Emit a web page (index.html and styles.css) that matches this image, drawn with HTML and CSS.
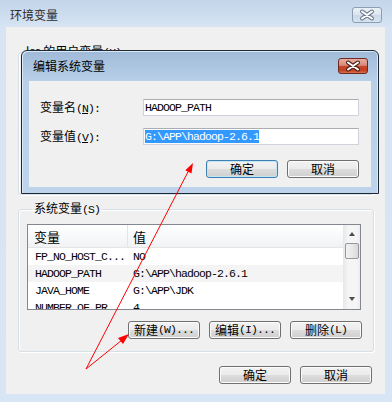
FILE: index.html
```html
<!DOCTYPE html>
<html lang="zh-CN">
<head>
  <meta charset="UTF-8">
  <title>环境变量</title>
  <link rel="stylesheet" href="styles.css">
</head>
<body>

  <div class="window">
    <div class="titlebar">
      <span class="title">环境变量</span>
      <span class="close inactive">
        <svg width="28" height="14" viewBox="0 0 28 14">
          <path d="M9 3.5 L19 10.5 M19 3.5 L9 10.5" stroke="#6d7b8c" stroke-width="4" stroke-linecap="round"/>
          <path d="M9 3.5 L19 10.5 M19 3.5 L9 10.5" stroke="#fff" stroke-width="2" stroke-linecap="round"/>
        </svg>
      </span>
    </div>

    <div class="client">
      <fieldset class="group user">
        <legend>lss 的用户变量<span class="m">(U)</span></legend>
      </fieldset>

      <fieldset class="group system">
        <legend>系统变量<span class="m">(S)</span></legend>
        <div class="list">
          <div class="list-main">
            <div class="list-head">
              <span class="c1">变量</span>
              <span class="c2">值</span>
            </div>
            <div class="row"><span class="c1 m">FP_NO_HOST_C...</span><span class="c2 m">NO</span></div>
            <div class="row hot"><span class="c1 m">HADOOP_PATH</span><span class="c2 m">G:\APP\hadoop-2.6.1</span></div>
            <div class="row"><span class="c1 m">JAVA_HOME</span><span class="c2 m">G:\APP\JDK</span></div>
            <div class="row"><span class="c1 m">NUMBER_OF_PR...</span><span class="c2 m">4</span></div>
          </div>
          <div class="vscroll">
            <span class="arrow up"></span>
            <span class="thumb"></span>
            <span class="arrow down"></span>
          </div>
        </div>
        <div class="btn-row">
          <span class="btn">新建<span class="m">(W)...</span></span>
          <span class="btn">编辑<span class="m">(I)...</span></span>
          <span class="btn">删除<span class="m">(L)</span></span>
        </div>
      </fieldset>

      <div class="btn-row bottom">
        <span class="btn">确定</span>
        <span class="btn">取消</span>
      </div>
    </div>

    <!-- 编辑系统变量 对话框 -->
    <div class="dlg">
      <div class="titlebar dlg-title">
        <span class="title">编辑系统变量</span>
        <span class="close red">
          <svg width="28" height="14" viewBox="0 0 28 14">
            <path d="M9 3.5 L19 10.5 M19 3.5 L9 10.5" stroke="#4a1d14" stroke-width="4" stroke-linecap="round"/>
            <path d="M9 3.5 L19 10.5 M19 3.5 L9 10.5" stroke="#fff" stroke-width="2" stroke-linecap="round"/>
          </svg>
        </span>
      </div>
      <div class="dlg-body">
        <div class="field">
          <label>变量名<span class="m">(<u>N</u>):</span></label>
          <span class="input m">HADOOP_PATH</span>
        </div>
        <div class="field">
          <label>变量值<span class="m">(<u>V</u>):</span></label>
          <span class="input m"><span class="sel">G:\APP\hadoop-2.6.1</span></span>
        </div>
        <div class="btn-row dlg-btns">
          <span class="btn default">确定</span>
          <span class="btn">取消</span>
        </div>
      </div>
    </div>

    <!-- 红色箭头 -->
    <svg class="arrows" width="392" height="402" viewBox="0 0 392 402">
      <line x1="86" y1="369" x2="190" y2="168" stroke="#ff0000" stroke-width="1"/>
      <polygon points="193,163 191.5,173.5 185.3,170.3" fill="#ff0000"/>
      <line x1="86" y1="369" x2="122" y2="340" stroke="#ff0000" stroke-width="1"/>
      <polygon points="129,334 123,344 118,338" fill="#ff0000"/>
    </svg>
  </div>

</body>
</html>
```

FILE: styles.css
```css
body { margin: 0; font-family: "Noto Sans CJK SC", sans-serif; font-size: 12px; color: #000; }
.m { font-family: "Liberation Mono", monospace; font-size: 11.5px; letter-spacing: -0.9px; }

.window { position: relative; width: 392px; height: 402px; overflow: hidden; background: linear-gradient(#c3d5ea, #d6e4f3 27px, #d7e5f4); }
.titlebar { height: 27px; box-sizing: border-box; padding: 2px 10px 0 10px; display: flex; align-items: center; justify-content: space-between; }
.title { line-height: 16px; color: #2b2b2b; }

.close { width: 30px; height: 16px; box-sizing: border-box; border-radius: 3px; display: flex; align-items: center; justify-content: center; }
.close svg { display: block; }
.close.inactive { border: 1px solid #8d9db2; background: linear-gradient(#eaf0f7, #dbe5f0 50%, #cbd8e7 51%, #d8e4f0); }
.close.red { border: 1px solid #6e2a1f; background: linear-gradient(#e7ada1, #d88b7c 45%, #c6492f 52%, #c23d20 80%, #d7714f); }

.client { margin-left: 6px; width: 379px; height: 367px; box-sizing: border-box; padding-top: 17px; background: #f0f0f0; }

.group { margin: 0 11px 0 12px; border: 1px solid #d5dfe5; border-radius: 3px; box-shadow: inset 1px 1px 0 #fff, 1px 1px 0 #fff; }
.group legend { margin-left: 5px; padding: 0 2px; line-height: 14px; }
.user { height: 151px; box-sizing: border-box; padding: 0; }
.system { margin-top: 6px; padding: 7px 12px 12px 8px; }

.list { height: 86px; box-sizing: border-box; border: 1px solid #828790; background: #fff; display: flex; }
.list-main { flex: 1; overflow: hidden; }
.list-head { height: 23px; display: flex; align-items: center; background: linear-gradient(#ffffff, #f7f8fa 60%, #f1f2f4); border-bottom: 1px solid #e5e5e5; box-sizing: border-box; }
.list-head .c1 { width: 100px; box-sizing: border-box; padding-left: 6px; line-height: 23px; border-right: 1px solid #e3e5e8; font-size: 13px; }
.list-head .c2 { padding-left: 5px; font-size: 13px; }
.row { height: 17px; display: flex; align-items: center; white-space: nowrap; }
.row.hot { background: #f4f4f4; }
.row .c1 { width: 98px; padding-left: 7px; }
.row .c2 { padding-left: 0; }

.vscroll { width: 17px; display: flex; flex-direction: column; align-items: center; background: linear-gradient(to right, #e7e7e7, #f5f5f5 30%, #f5f5f5 80%, #ececec); }
.arrow { width: 0; height: 0; border-left: 3.5px solid transparent; border-right: 3.5px solid transparent; }
.arrow.up { margin-top: 7px; border-bottom: 4px solid #4d4d4d; }
.arrow.down { margin-top: auto; margin-bottom: 8px; border-top: 4px solid #4d4d4d; }
.thumb { margin-top: 7px; width: 14px; height: 16px; box-sizing: border-box; border: 1px solid #979797; border-radius: 2px; background: linear-gradient(to right, #f3f3f3, #e8e8e8 50%, #d9d9d9); }

.btn-row { display: flex; justify-content: flex-end; gap: 9px; }
.system .btn-row { margin-top: 11px; margin-right: -1px; }
.btn-row.bottom { margin-top: 14px; padding-right: 13px; }
.btn { width: 72px; height: 18px; box-sizing: border-box; border: 1px solid #707070; border-radius: 3px; display: flex; align-items: center; justify-content: center; white-space: nowrap; background: linear-gradient(#f2f2f2, #ebebeb 50%, #dddddd 51%, #cfcfcf); box-shadow: inset 0 0 0 1px #fcfcfc; line-height: 14px; }
.btn.default { border-color: #3c7fb1; box-shadow: inset 0 0 0 1px #c4e5f6; }

.dlg { position: absolute; left: 21px; top: 50px; width: 358px; height: 144px; box-sizing: border-box; border: 1px solid #1d2a36; border-radius: 6px 6px 0 0; background: linear-gradient(#9fbad8, #b8cfe8 30px, #bdd4ec); box-shadow: inset 1px 1px 0 #dbe8f5, inset -1px 0 0 #dbe8f5; }
.dlg-title { height: 30px; padding: 0 10px 0 11px; }
.dlg-title .title { color: #000; }
.dlg-body { margin: 0 7px; height: 106px; box-sizing: border-box; padding: 17px 12px 0 11px; background: #f0f0f0; }
.field { display: flex; align-items: center; margin-bottom: 10px; }
.field label { width: 103px; line-height: 17px; }
.input { width: 216px; height: 17px; box-sizing: border-box; border: 1px solid #d0d4da; border-top-color: #abadb3; background: #fff; padding-left: 1px; display: flex; align-items: center; white-space: nowrap; }
.sel { background: #3399ff; color: #fff; line-height: 13px; }
.dlg-btns { margin-top: 14px; }
.arrows { position: absolute; left: 0; top: 0; pointer-events: none; }
```
